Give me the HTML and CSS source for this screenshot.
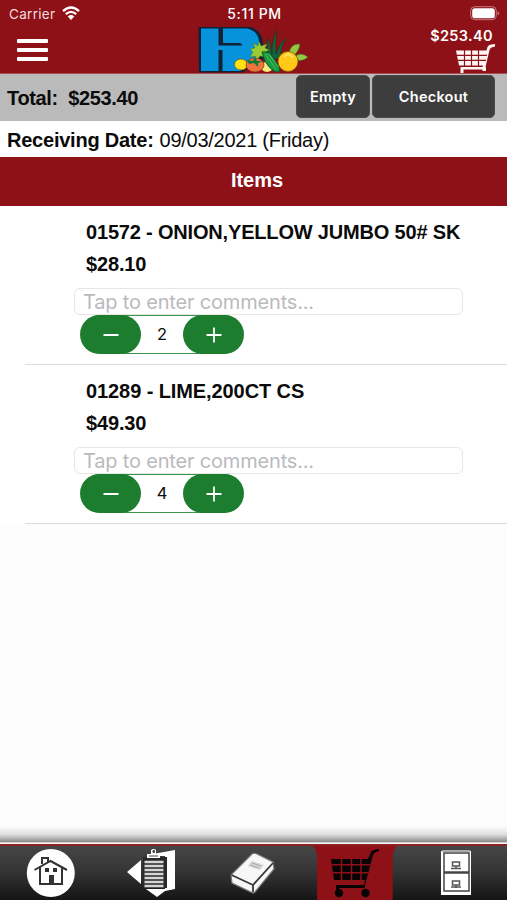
FILE: index.html
```
<!DOCTYPE html>
<html lang="en">
<head>
<meta charset="utf-8">
<title>Cart</title>
<link rel="stylesheet" href="styles.css">
</head>
<body>
<div class="app">
  <header class="header">
    <div class="status">
      <div class="carrier"><span class="carrier-name">Carrier</span>
        <svg class="wifi" width="20" height="15" viewBox="0 0 20 15"><path d="M2 5.1Q10-2.2 18 5.1M4.8 8.2Q10 3.6 15.2 8.2" fill="none" stroke="#fff" stroke-width="2.3"/><path d="M6.7 10.4Q10 7.6 13.3 10.4L10 14Z" fill="#fff"/></svg>
      </div>
      <span class="time">5:11 PM</span>
      <svg class="battery" width="30" height="15" viewBox="0 0 30 15"><rect x=".7" y=".7" width="25.6" height="13" rx="4" fill="none" stroke="#c87a7e"/><rect x="2.2" y="2.2" width="22.6" height="10" rx="2.5" fill="#fff"/><path d="M27.7 5v4.5q1.5-.6 1.5-2.2T27.7 5" fill="#c87a7e"/></svg>
    </div>
    <div class="nav">
      <div class="menu"><i></i><i></i><i></i></div>
      <svg class="logo" width="112" height="50" viewBox="198 25 112 50">
        <path d="M198.500 27H250Q262 30 263 43V60L242 72.500H199Z" fill="#102235"/>
        <path d="M201 28.500H247Q258.500 31 259 42V58L240 71H201Z" fill="#0793dc"/>
        <path d="M218.500 28H223V43H239Q242 43 242 45.500H218.500ZM218.500 50H222.500V72H218.500Z" fill="#102235"/>
        <path d="M269 58Q266 43 268 38Q271 46 272 54Q272 40 277 30Q275 44 276 54Q279 44 286 38Q280 48 280 59Z" fill="#15633a" stroke="#073c25" stroke-width=".6"/>
        <path d="M259 41L261 46L267 44L265 48L269 50L264 53L266 57L260 56L257 60L255 56L250 57L253 52L250 49L255 48L253 43L258 46Z" fill="#9bcc36" stroke="#497c22" stroke-width=".5"/>
        <ellipse cx="241" cy="64.500" rx="6.500" ry="5.500" fill="#ffe012" stroke="#6d5616" stroke-width=".7"/>
        <ellipse cx="267" cy="67" rx="6" ry="5" fill="#f7eb7b"/>
        <ellipse cx="255" cy="65" rx="9" ry="7" fill="#ef743c" stroke="#7e3421" stroke-width=".7"/>
        <path d="M247 60L253 61L255 57L257 61L263 61L258 63L258 67L254 63L249 64Z" fill="#13773a"/>
        <path d="M262 52Q270 50 276 62Q281 68 279 72Q272 73 265 61Z" fill="#169b43" stroke="#075c2b"/>
        <path d="M265 54L276 69M268 53L278 67" stroke="#55bd58" fill="none"/>
        <path d="M289 54Q290 43 300 44Q299 52 292 57ZM295 57Q300 51 308 57Q301 63 295 59Z" fill="#95c83f" stroke="#376b26" stroke-width=".6"/>
        <ellipse cx="288" cy="61.500" rx="10" ry="10" fill="#ffc915" stroke="#805b16" stroke-width=".8"/>
        <path d="M284 57Q289 51 293 58" stroke="#ffe562" stroke-width="2" fill="none"/>
      </svg>
      <div class="cart-summary">
        <span class="cart-total">$253.40</span>
        <svg class="cart-icon" width="40" height="30" viewBox="0 0 40 30"><path d="M0 6.500H30.500L31.500 3Q32 1 35 .5L39 0V2.500L35.500 3.500Q34 4 33.500 6L29.500 23H30V27H26.500V25.500H7.500V29H4.500V23H26.500L27 21.500H3Z" fill="#fff5f3"/><path d="M.5 11.300H31M1.500 16.300H30M8.500 6V22M15.500 6V22M22.500 6V22" stroke="#8e1117" stroke-width="1.200"/></svg>
      </div>
    </div>
  </header>
  <section class="totalbar">
    <strong class="total">Total:&nbsp; $253.40</strong>
    <button class="btn btn-empty">Empty</button>
    <button class="btn btn-checkout">Checkout</button>
  </section>
  <section class="date"><strong>Receiving Date:</strong><span>09/03/2021 (Friday)</span></section>
  <h1 class="heading">Items</h1>
  <main class="items">
    <article class="item">
      <h2 class="name name-onion">01572 - ONION,YELLOW JUMBO 50# SK</h2>
      <div class="price">$28.10</div>
      <div class="comment">Tap to enter comments...</div>
      <div class="stepper"><span class="step"><svg width="16" height="16"><path d="M.5 8h15" stroke="#fff" stroke-width="1.800"/></svg></span><span class="qty">2</span><span class="step"><svg width="16" height="16"><path d="M.5 8h15M8 .5v15" stroke="#fff" stroke-width="1.800"/></svg></span></div>
    </article>
    <article class="item">
      <h2 class="name name-lime">01289 - LIME,200CT CS</h2>
      <div class="price">$49.30</div>
      <div class="comment">Tap to enter comments...</div>
      <div class="stepper"><span class="step"><svg width="16" height="16"><path d="M.5 8h15" stroke="#fff" stroke-width="1.800"/></svg></span><span class="qty">4</span><span class="step"><svg width="16" height="16"><path d="M.5 8h15M8 .5v15" stroke="#fff" stroke-width="1.800"/></svg></span></div>
    </article>
  </main>
  <div class="shade"></div>
  <nav class="tabs">
    <div class="tab"><svg width="50" height="50" viewBox="26 848 50 50"><circle cx="50.800" cy="873" r="24" fill="#fff"/><g fill="none" stroke="#333" stroke-width="2"><path d="M34.500 870L50.500 861L67 870M40 867V884H62V867M42 864V858H48V862"/></g><path d="M45 868h4v4h-4zM53 868h4v4h-4zM49 875h5v9h-5z" fill="#333"/></svg></div>
    <div class="tab"><svg width="52" height="50" viewBox="126 848 52 50"><path d="M127 872L141 860V884ZM153 854L175 850V889L165 891L157 897L146 889H165V856H153Z" fill="#fff"/><path d="M143 857H167V888H143Z" fill="#292929"/><path d="M144.500 862h19M144.500 866h19M144.500 870h19M144.500 874h19M144.500 878h19M144.500 882h19M144.500 886h19" stroke="#d5d5d5" stroke-width="2.300"/><path d="M147 858V854H151V850Q153.500 848 156 850V854H160V858Z" fill="#fff"/><path d="M153 850.500h1.500v2H153zM149 856h9" stroke="#444" fill="#444"/></svg></div>
    <div class="tab"><svg width="50" height="50" viewBox="228 848 50 50"><path d="M231 875L252 854Q254 852.500 257 854L273 862L274 869L255 892L253 893L232 883Z" fill="#f7f7f7" stroke="#777" stroke-width="1.200"/><path d="M231.500 875L253 885L273 863M253 885V892" fill="none" stroke="#373737" stroke-width="1.800"/><path d="M252 861L264 865L260 870L248 866Z" fill="#d5d5d5"/><path d="M252 863l9 3M250 865l9 3" stroke="#aaa"/></svg></div>
    <div class="tab active"><div class="active-bg"><svg width="50" height="50" viewBox="329 848 50 50"><path d="M330 859H367L370 852Q371 850 378 849V851Q373 852 372 855L364 885V888H338V891H335V885H363L364 880H333Z" fill="#080304"/><path d="M331 864.700H369M332 872.700H367M340.500 859V880M350.500 859V880M360 859V880" stroke="#8e1117" stroke-width="1.500"/><circle cx="338" cy="893" r="4.200" fill="#080304"/><circle cx="364.500" cy="893" r="4.200" fill="#080304"/></svg></div></div>
    <div class="tab"><svg width="32" height="46" viewBox="439 850 32 46"><path d="M440 851H470V895H440Z" fill="#fff"/><path d="M443 853H468V872H443ZM443 873H468V891H443Z" fill="#fff" stroke="#444" stroke-width="1.500"/><path d="M441 851h28" stroke="#aaa" stroke-width="2"/><path d="M451.500 862h7v4h-7zM451.500 881h7v4h-7zM450 868.500h10M450 887h10M455 866v3M455 885v3" fill="none" stroke="#555" stroke-width="1.500"/></svg></div>
  </nav>
</div>
</body>
</html>
```

FILE: styles.css
```
* { box-sizing: border-box; }
body { margin: 0; background: #fcfcfc; color: #0b0b0b; font-family: "Liberation Sans", Arial, sans-serif; }
svg { display: block; flex: none; }
.app { display: flex; flex-direction: column; width: 507px; height: 900px; overflow: hidden; }
.header { flex: 0 0 74px; overflow: hidden; background: #8e1117; color: #fff; border-bottom: 1px solid #ad4e52; }
.status { display: grid; grid-template-columns: 1fr 60px 1fr; height: 25px; padding: 6px 7px 0 9px; font: 14px/16px Inter, sans-serif; }
.carrier { display: flex; gap: 6px; color: #f4dcde; }
.carrier-name { font-size: 13.5px; letter-spacing: .3px; }
.time { font-weight: 500; letter-spacing: .65px; white-space: nowrap; text-align: center; }
.battery { justify-self: end; }
.nav { display: grid; grid-template-columns: 1fr 112px 1fr; height: 50px; }
.menu { display: flex; flex-direction: column; gap: 5px; width: 31px; margin: 14px 0 0 17px; }
.menu i { height: 4px; border-radius: 1px; background: #fff; }
.cart-summary { display: flex; flex-direction: column; align-items: flex-end; padding: 2px 11px 0 0; }
.cart-total { font: 600 14.5px/17px Inter, sans-serif; letter-spacing: .35px; margin-right: 3px; }
.totalbar { display: flex; flex: 0 0 47px; min-height: 0; padding: 1px 12px 0 7px; background: #bababa; }
.total { flex: 1; font-size: 20px; line-height: 46px; letter-spacing: -.35px; white-space: nowrap; }
.btn { height: 43px; padding: 0; border: 1px solid #4b4b4b; border-radius: 5px; background: #3d3d3d; color: #fff; font: 600 14.5px/41px Inter, sans-serif; letter-spacing: .25px; }
.btn-empty { width: 74px; }
.btn-checkout { width: 123px; margin-left: 2px; }
.date { display: flex; gap: 6px; flex: 0 0 36px; min-height: 0; padding-left: 7px; background: #fff; font-size: 20px; line-height: 38px; white-space: nowrap; }
.date strong { letter-spacing: -.23px; }
.date span { letter-spacing: -.27px; }
.heading { flex: 0 0 49px; margin: 0; padding-left: 7px; background: #8e1117; color: #fff; font-size: 20px; line-height: 46px; text-align: center; }
.items { background: #fff; }
.item { height: 159px; margin-left: 25px; padding: 10px 0 0 49px; border-bottom: 1px solid #dcdcdc; }
.name, .price { margin: 0 0 0 12px; font-size: 20px; font-weight: 700; line-height: 32px; white-space: nowrap; }
.name-onion { letter-spacing: -.18px; }
.name-lime { letter-spacing: -.09px; }
.price { letter-spacing: -.15px; }
.comment { width: 389px; height: 27px; margin-top: 8px; padding-left: 8px; border: 1px solid #e6e6e6; border-radius: 6px; color: #bababd; font: 20px/26px Inter, sans-serif; letter-spacing: -.18px; white-space: nowrap; }
.stepper { display: flex; width: 164px; height: 39px; margin: 0 0 0 6px; border-radius: 20px; overflow: hidden; box-shadow: inset 0 1px #3e944b, inset 0 -1px #3e944b; }
.step { display: flex; align-items: center; justify-content: center; width: 61px; border-radius: 20px; background: #1c7d2f; }
.qty { flex: 1; text-align: center; font: 16.5px/39px Inter, sans-serif; }
.shade { flex: 0 0 18px; margin-top: auto; background: linear-gradient(#fcfcfc, #e1e1e1 45%, #929292 86%, #777 87%, #fff 94%, #eee); }
.tabs { display: grid; grid-template-columns: repeat(5, 1fr); flex: 0 0 56px; border-top: 2px solid #8c2022; background: linear-gradient(#464646, #353535 45%, #151515); }
.tab { display: flex; align-items: center; justify-content: center; height: 54px; }
.active-bg { display: flex; align-items: center; justify-content: center; width: 84px; height: 54px; background: #8e1117; clip-path: polygon(0 0, 100% 0, 97% 7%, 95% 16%, 95% 100%, 5% 100%, 5% 16%, 3% 7%); }
```
